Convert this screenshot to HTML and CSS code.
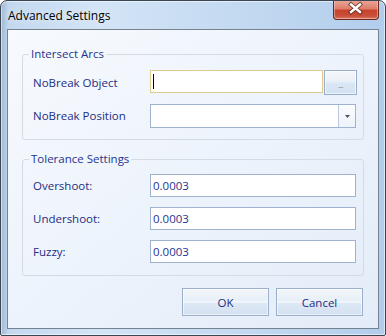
FILE: index.html
```html
<!DOCTYPE html>
<html>
<head>
    <meta charset="UTF-8">
    <title>Advanced Settings</title>
    <link rel="stylesheet" href="styles.css">
</head>
<body>
    <div class="window">
        <div class="titlebar">
            <span class="title">Advanced Settings</span>
            <div class="close">
                <svg width="46" height="19" viewBox="0 0 46 19">
                    <path d="M18 5.5 L27 13 M27 5.5 L18 13" stroke="#4a1c14" stroke-width="4.2" stroke-linecap="square" opacity="0.75"/>
                    <path d="M18 5.5 L27 13 M27 5.5 L18 13" stroke="#fff" stroke-width="2.4" stroke-linecap="square"/>
                </svg>
            </div>
        </div>

        <div class="client">
            <fieldset class="group">
                <legend>Intersect Arcs</legend>
                <div class="rows rows-arcs">
                    <label>NoBreak Object</label>
                    <div class="picker">
                        <div class="field focused"><span class="caret"></span></div>
                        <div class="browse">...</div>
                    </div>
                    <label>NoBreak Position</label>
                    <div class="combo">
                        <div class="combo-text"></div>
                        <div class="combo-arrow">
                            <svg width="5" height="3" viewBox="0 0 5 3"><path d="M0 0 H5 L2.5 3 Z" fill="#4b5563"/></svg>
                        </div>
                    </div>
                </div>
            </fieldset>

            <fieldset class="group group-tol">
                <legend>Tolerance Settings</legend>
                <div class="rows rows-tol">
                    <label>Overshoot:</label>
                    <div class="field">0.0003</div>
                    <label>Undershoot:</label>
                    <div class="field">0.0003</div>
                    <label>Fuzzy:</label>
                    <div class="field">0.0003</div>
                </div>
            </fieldset>

            <div class="actions">
                <button class="button">OK</button>
                <button class="button">Cancel</button>
            </div>
        </div>
    </div>
</body>
</html>
```

FILE: styles.css
```css
body {
    margin: 0;
    font-family: "Open Sans", "Noto Sans", sans-serif;
    font-size: 11.5px;
    background: #fff;
}
.window {
    width: 386px;
    height: 336px;
    box-sizing: border-box;
    border: 1px solid #3b4654;
    border-radius: 7px 7px 2px 2px;
    background: linear-gradient(to right, #9fb8d2 0, #c3d8ef 2%, #d3e4f6 25%, #c4daf1 60%, #b2cdec 100%);
    box-shadow: inset 0 0 0 1px rgba(255, 255, 255, 0.55);
    overflow: hidden;
}
.titlebar {
    height: 28px;
    display: flex;
    align-items: flex-start;
    padding-left: 7px;
}
.title {
    margin-top: 7px;
    line-height: 16px;
    font-size: 12px;
    color: #000;
    text-shadow: 0 0 6px rgba(255, 255, 255, 0.9);
}
.close {
    margin-left: auto;
    margin-right: 6px;
    margin-top: -1px;
    width: 46px;
    height: 20px;
    box-sizing: border-box;
    border: 1px solid #6a2a1e;
    border-top: none;
    border-radius: 0 0 4px 4px;
    background: linear-gradient(to bottom, #e9a99a 0%, #dd7f6b 45%, #c8442e 55%, #c9503a 85%, #d9806c 100%);
    box-shadow: inset 0 0 0 1px rgba(255, 220, 210, 0.45);
}
.close svg {
    display: block;
    margin: -1px 0 0 -1px;
}
.client {
    margin: 0 6px;
    height: 300px;
    box-sizing: border-box;
    border: 1px solid #76828f;
    background: linear-gradient(to bottom right, #f7fafe 0%, #eef4fc 45%, #e3ecf8 100%);
    display: flex;
    flex-direction: column;
}
.group {
    margin: 16px 14px 0;
    padding: 8px 6px 11px 6px;
    border: 1px solid #d3dbe3;
    border-radius: 3px;
    min-inline-size: 0;
}
.group-tol {
    margin-top: 11px;
    padding-top: 7px;
    padding-bottom: 12px;
}
.group legend {
    padding: 0 2px;
    line-height: 16px;
    color: #1d348f;
}
.rows {
    display: grid;
    grid-template-columns: 117px 1fr;
    padding-left: 4px;
    align-items: center;
}
.rows-arcs {
    row-gap: 9px;
}
.rows-tol {
    row-gap: 10px;
}
.rows label {
    color: #1c2d82;
    line-height: 16px;
}
.picker {
    display: flex;
    align-items: flex-start;
    gap: 1px;
}
.field {
    height: 23px;
    box-sizing: border-box;
    border: 1px solid #9fb2cf;
    background: #fff;
    padding: 0 2px;
    line-height: 21px;
    color: #1c3590;
    margin-right: 1px;
}
.picker .field {
    flex: 1;
    margin-right: 0;
}
.field.focused {
    border-color: #ddca8c;
    display: flex;
    align-items: center;
}
.caret {
    width: 1px;
    height: 15px;
    background: #000;
}
.browse {
    width: 33px;
    height: 25px;
    box-sizing: border-box;
    border: 1px solid #98aecb;
    background: linear-gradient(to bottom, #f4f7fb 0%, #eaf0f8 45%, #d9e6f5 55%, #d3e2f3 100%);
    box-shadow: inset 0 0 0 1px rgba(255, 255, 255, 0.6);
    color: #6a7584;
    font-size: 8px;
    letter-spacing: -0.5px;
    text-align: center;
    line-height: 27px;
}
.combo {
    height: 24px;
    margin-right: 1px;
    box-sizing: border-box;
    border: 1px solid #9fb2cf;
    background: #fff;
    display: flex;
}
.combo-text {
    flex: 1;
}
.combo-arrow {
    width: 16px;
    border-left: 1px solid #b9c8dc;
    background: linear-gradient(to bottom, #fbfcfe, #eef3fa);
    display: flex;
    align-items: center;
    justify-content: center;
}
.combo-arrow svg {
    display: block;
}
.actions {
    margin: 12px 15px 0 0;
    display: flex;
    justify-content: flex-end;
    gap: 7px;
}
.button {
    width: 87px;
    height: 28px;
    box-sizing: border-box;
    border: 1px solid #9cb0cc;
    background: linear-gradient(to bottom, #f1f5fa 0%, #e9eff7 44%, #f4f8fc 50%, #dde8f5 56%, #d4e1f2 100%);
    box-shadow: inset 0 0 0 1px rgba(255, 255, 255, 0.55);
    font-family: inherit;
    font-size: 11.5px;
    color: #1c2d82;
    padding: 0;
}
```
